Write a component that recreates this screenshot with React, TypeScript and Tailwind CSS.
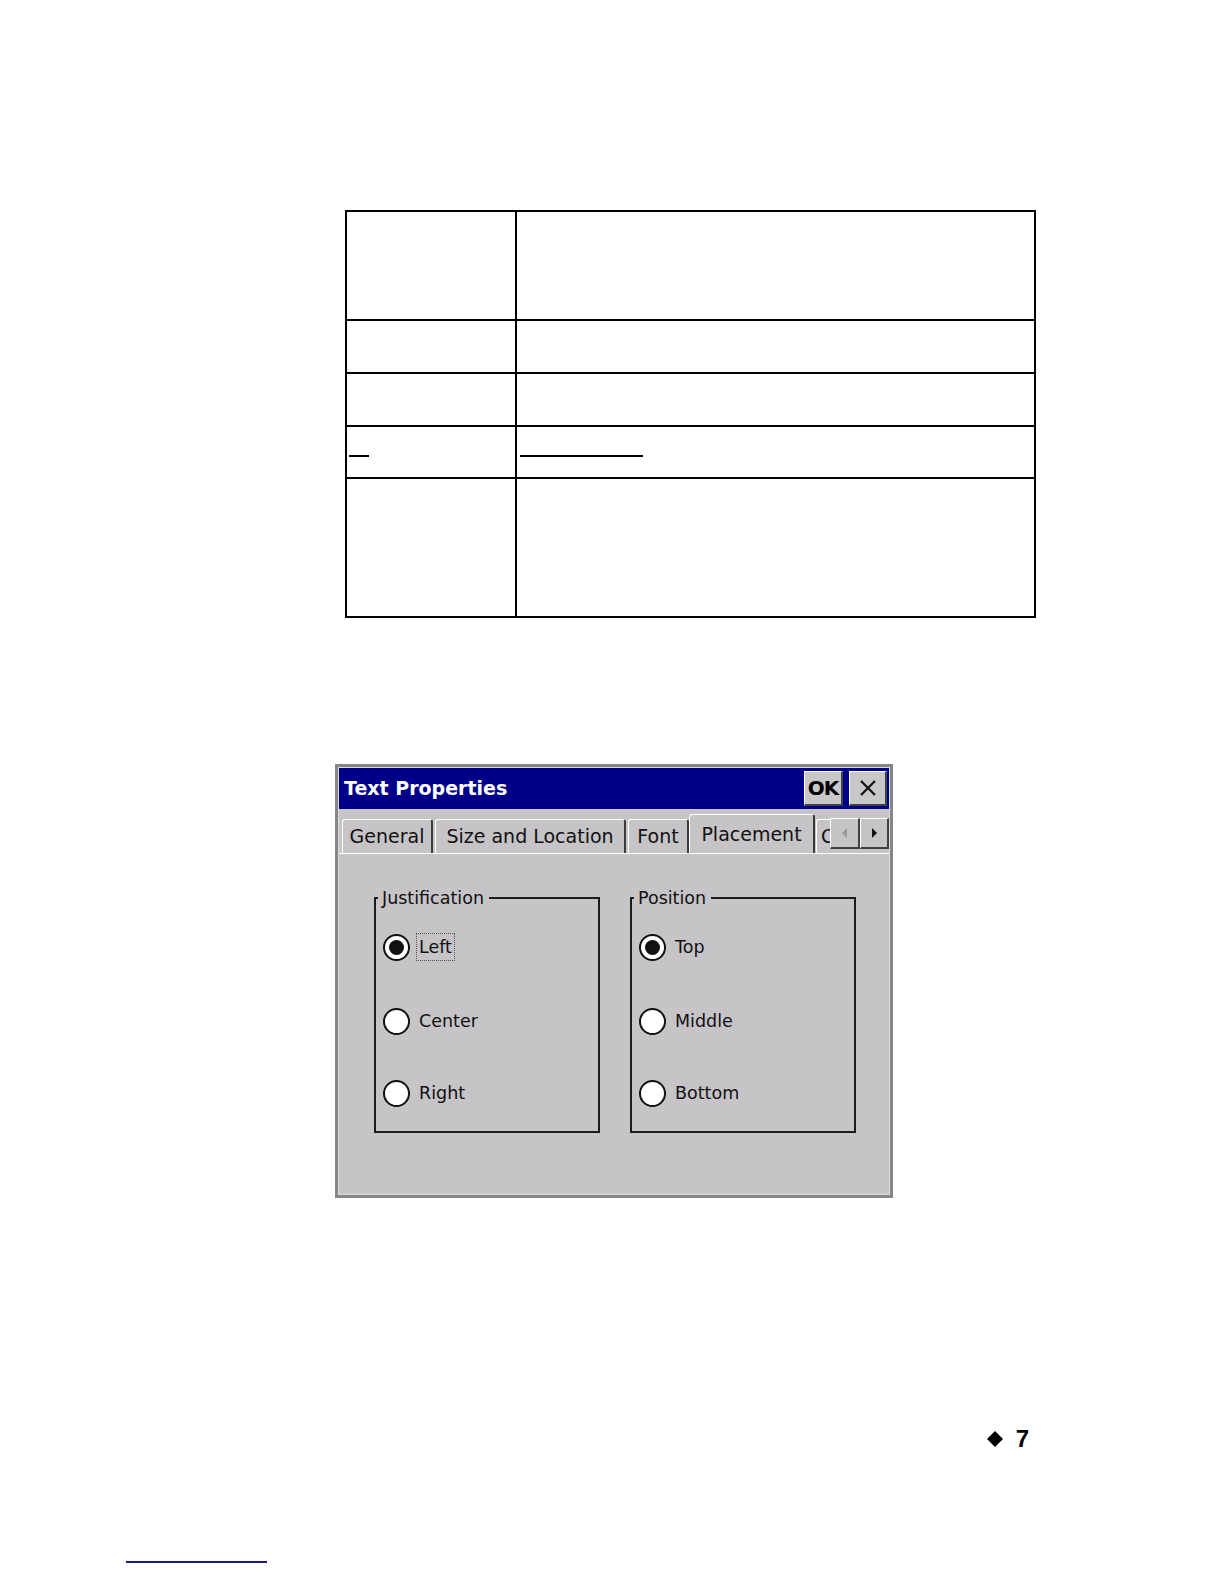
import React from "react";

const ui = { fontFamily: '"DejaVu Sans", Verdana, sans-serif' };

function Radio({ checked, label, focus }: { checked?: boolean; label: string; focus?: boolean }) {
  return (
    <div className="flex items-center h-[28px]">
      <div className="w-[27px] h-[27px] rounded-full border-2 border-[#111] bg-white flex items-center justify-center shrink-0">
        {checked && <div className="w-[15px] h-[15px] rounded-full bg-[#111]" />}
      </div>
      <span
        className={
          "ml-[6px] px-[2px] leading-[26px] text-[17.5px] text-[#111] " +
          (focus ? "border border-dotted border-[#555]" : "border border-transparent")
        }
      >
        {label}
      </span>
    </div>
  );
}

function Group({ title, items }: { title: string; items: { label: string; checked?: boolean; focus?: boolean }[] }) {
  return (
    <fieldset className="w-[226px] h-[245px] border-2 border-[#1c1c1c] m-0 p-0 min-w-0">
      <legend className="ml-[2px] pl-[4px] pr-[5px] text-[17.5px] leading-[20px] text-[#111]">{title}</legend>
      <div className="flex flex-col pl-[7px] pt-[25px]">
        <Radio {...items[0]} />
        <div className="h-[46px]" />
        <Radio {...items[1]} />
        <div className="h-[44px]" />
        <Radio {...items[2]} />
      </div>
    </fieldset>
  );
}

function Tab({ label, w, selected, ml }: { label: string; w: string; selected?: boolean; ml?: string }) {
  return (
    <div
      className={
        "shrink-0 flex items-center justify-center border-l border-t border-white border-r-2 border-r-[#3a3a3a] rounded-t-[3px] bg-[#c6c4c7] text-[19px] text-[#111] whitespace-nowrap overflow-hidden " +
        w +
        " " +
        (ml ?? "") +
        (selected ? " h-[41px] relative z-10 -mb-[2px] pb-[2px]" : " h-[34px]")
      }
    >
      {label}
    </div>
  );
}

export default function App() {
  return (
    <div className="w-[1224px] h-[1584px] bg-white relative overflow-hidden">
      {/* Table */}
      <div className="pt-[210px] pl-[345px]">
        <div className="w-[691px] border-l-2 border-t-2 border-r-2 border-b-2 border-black">
          <div className="flex h-[109px] border-b-2 border-black">
            <div className="w-[170px] border-r-2 border-black" />
            <div className="flex-1" />
          </div>
          <div className="flex h-[53px] border-b-2 border-black">
            <div className="w-[170px] border-r-2 border-black" />
            <div className="flex-1" />
          </div>
          <div className="flex h-[53px] border-b-2 border-black">
            <div className="w-[170px] border-r-2 border-black" />
            <div className="flex-1" />
          </div>
          <div className="flex h-[52px] border-b-2 border-black">
            <div className="w-[170px] border-r-2 border-black pt-[28px] pl-[2px]">
              <div className="w-[20px] h-[2px] bg-black" />
            </div>
            <div className="flex-1 pt-[28px] pl-[3px]">
              <div className="w-[123px] h-[2px] bg-black" />
            </div>
          </div>
          <div className="flex h-[137px]">
            <div className="w-[170px] border-r-2 border-black" />
            <div className="flex-1" />
          </div>
        </div>
      </div>

      {/* Dialog */}
      <div className="mt-[146px] ml-[335px] w-[558px] h-[434px] border-[3px] border-[#868686]" style={ui}>
        <div className="w-full h-full border border-[#dcdcdc] bg-[#c6c4c7] flex flex-col">
          {/* Title bar */}
          <div className="h-[41px] bg-[#000088] flex items-center pl-[5px] pr-[2px]">
            <span className="text-white font-bold text-[19px] leading-none flex-1">Text Properties</span>
            <div className="w-[39px] h-[35px] bg-[#c8c8c8] border-t border-l border-white border-b-2 border-r-2 border-b-[#404040] border-r-[#404040] flex items-center justify-center">
              <span className="font-bold text-[20px] text-black tracking-[-1px] leading-none">OK</span>
            </div>
            <div className="ml-[6px] w-[38px] h-[35px] bg-[#c8c8c8] border-t border-l border-white border-b-2 border-r-2 border-b-[#404040] border-r-[#404040] flex items-center justify-center">
              <svg width="18" height="18" viewBox="0 0 18 18">
                <path d="M2 2 L16 16 M16 2 L2 16" stroke="#111" strokeWidth="2.2" fill="none" />
              </svg>
            </div>
          </div>

          {/* Tab strip */}
          <div className="relative h-[44px] flex items-end pl-[3px] overflow-hidden">
            <Tab label="General" w="w-[91px]" />
            <Tab label="Size and Location" w="w-[191px]" ml="ml-[2px]" />
            <Tab label="Font" w="w-[61px]" ml="ml-[2px]" />
            <Tab label="Placement" w="w-[126px]" selected />
            <div className="shrink-0 ml-[1px] w-[40px] h-[34px] border-l border-t border-white rounded-t-[3px] flex items-center pl-[4px] text-[19px] text-[#111] overflow-hidden">
              C
            </div>
            <div className="absolute right-0 top-[9px] flex z-20">
              <div className="w-[30px] h-[31px] bg-[#c6c4c7] border-t border-l border-white border-b-2 border-r-2 border-b-[#404040] border-r-[#404040] flex items-center justify-center">
                <svg width="8" height="12" viewBox="0 0 8 12">
                  <path d="M6 1 L1 6 L6 11 Z" fill="#9a9a9a" />
                </svg>
              </div>
              <div className="w-[29px] h-[31px] bg-[#c6c4c7] border-t border-l border-white border-b-2 border-r-2 border-b-[#404040] border-r-[#404040] flex items-center justify-center">
                <svg width="8" height="12" viewBox="0 0 8 12">
                  <path d="M2 1 L7 6 L2 11 Z" fill="#111" />
                </svg>
              </div>
            </div>
          </div>

          {/* Panel */}
          <div className="flex-1 border-t border-white">
            <div className="flex gap-[30px] pl-[35px] pt-[34px]">
              <Group
                title="Justification"
                items={[{ label: "Left", checked: true, focus: true }, { label: "Center" }, { label: "Right" }]}
              />
              <Group title="Position" items={[{ label: "Top", checked: true }, { label: "Middle" }, { label: "Bottom" }]} />
            </div>
          </div>
        </div>
      </div>

      {/* Page number */}
      <div className="mt-[229px] flex justify-end items-center pr-[195px]" style={{ fontFamily: '"Liberation Sans", Arial, sans-serif' }}>
        <svg width="16" height="16" viewBox="0 0 16 16">
          <polygon points="8,0 16,8 8,16 0,8" fill="#000" />
        </svg>
        <span className="ml-[13px] text-[24px] font-bold leading-none text-black">7</span>
      </div>

      {/* Footer rule */}
      <div className="mt-[110px] ml-[126px] w-[141px] h-[2px] bg-[#1a1a8a]" />
    </div>
  );
}
